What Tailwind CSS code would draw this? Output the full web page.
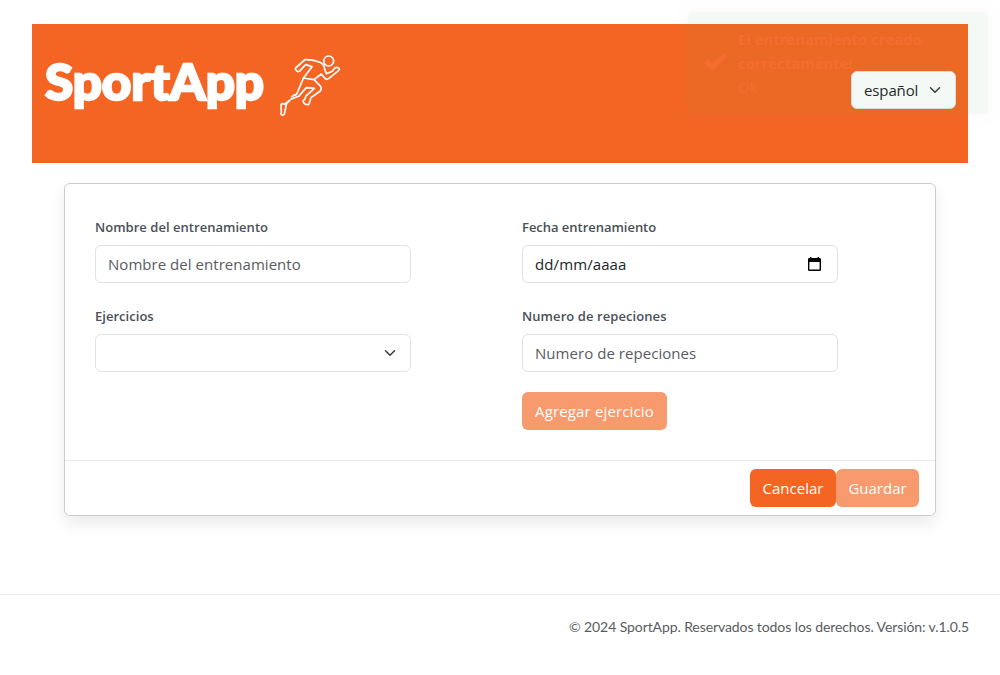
<!DOCTYPE html>
<html lang="es">
<head>
<meta charset="utf-8">
<title>SportApp</title>
<script src="https://cdn.jsdelivr.net/npm/@tailwindcss/browser@4"></script>
</head>
<body class="relative h-[675px] overflow-hidden bg-white pt-6 font-['Open_Sans',sans-serif] text-[15px] text-[#212529]">
<header class="mx-8 flex h-[139px] justify-between bg-[#f46523] px-3">
  <div class="flex">
    <svg class="mt-5 h-[90px] w-[226px]" viewBox="0 0 226 90" role="img"><text x="1" y="56" textLength="219" lengthAdjust="spacingAndGlyphs" class="fill-white stroke-white stroke-[2.4px] font-['Lato',sans-serif] text-[50px] font-black">SportApp</text></svg>
    <svg class="mt-[21px] size-20" viewBox="0 0 240 240" fill="none" stroke="#fff" stroke-width="5" stroke-linecap="round" stroke-linejoin="round">
      <circle cx="176" cy="48" r="15"/>
      <path d="M65 155 72 151Q79 151 82 143L101 98 126 65 107 59 88 79Q81 82 77 74Q74 70 80 66L105 44Q130 43 150 52Q164 59 164 73L169 86 187 79 194 69Q202 64 208 71Q208 76 202 80L176 101Q168 106 162 97L154 87 132 104 152 124Q155 131 151 138L123 158 117 177Q115 181 108 178Q101 176 100 171Q98 165 105 163L107 154 133 130 109 128 86 154 64 162 50 175 43 207Q41 212 35 210Q32 207 34 199L33 179Q36 174 43 178L60 165M99 99 132 104"/>
    </svg>
  </div>
  <button class="mt-[47px] flex h-[38px] w-[105px] items-center justify-between rounded-md border border-[#dee2e6] bg-white pr-3 pl-3">
    <span class="tracking-[-0.12px]">español</span>
    <svg class="mr-0.5 size-3" viewBox="0 0 16 16" fill="none" stroke="#343a40" stroke-width="2" stroke-linecap="round" stroke-linejoin="round"><path d="m2 5 6 6 6-6"/></svg>
  </button>
</header>

<main class="mx-16 mt-5 h-[333px] rounded-md border border-[#cbccce] bg-white shadow-[0_8px_16px_rgba(0,0,0,0.08)]">
  <div class="grid h-[277px] grid-cols-[316px_316px] content-start gap-x-[111px] border-b border-[#e9e9ea] px-[30px] pt-[33px]">
    <div class="h-[89px]">
      <label class="block h-7 text-[13px] leading-5 font-semibold text-[#495057]"><span class="tracking-[0.03px]">Nombre del entrenamiento</span></label>
      <div class="flex h-[38px] items-center rounded-md border border-[#dee2e6] px-3 text-[#595c5f]"><span class="tracking-[0.04px]">Nombre del entrenamiento</span></div>
    </div>
    <div class="h-[89px]">
      <label class="block h-7 text-[13px] leading-5 font-semibold text-[#495057]"><span class="tracking-[-0.03px]">Fecha entrenamiento</span></label>
      <div class="flex h-[38px] items-center justify-between rounded-md border border-[#dee2e6] px-3"><span class="tracking-[0.1px]">dd/mm/aaaa</span>
        <svg class="mr-1 h-[14px] w-[13px]" viewBox="0 0 13 14"><path fill="#000" fill-rule="evenodd" d="M2 0h1.5v1h6V0H11v1h.8q1.2 0 1.2 1.2v10.6q0 1.2-1.2 1.2H1.2Q0 14 0 12.8V2.2Q0 1 1.2 1H2zM1.4 5v7.6h10.2V5z"/></svg>
      </div>
    </div>
    <div>
      <label class="block h-7 text-[13px] leading-5 font-semibold text-[#495057]"><span class="tracking-[0.03px]">Ejercicios</span></label>
      <div class="flex h-[38px] items-center justify-end rounded-md border border-[#dee2e6] px-3">
        <svg class="mr-0.5 size-3" viewBox="0 0 16 16" fill="none" stroke="#343a40" stroke-width="2" stroke-linecap="round" stroke-linejoin="round"><path d="m2 5 6 6 6-6"/></svg>
      </div>
    </div>
    <div>
      <label class="block h-7 text-[13px] leading-5 font-semibold text-[#495057]"><span class="tracking-[0.08px]">Numero de repeciones</span></label>
      <div class="flex h-[38px] items-center rounded-md border border-[#dee2e6] px-3 text-[#595c5f]"><span class="tracking-[0.05px]">Numero de repeciones</span></div>
      <button class="mt-5 flex h-[38px] w-[145px] items-center justify-center whitespace-nowrap rounded-md bg-[#f79a6d] text-white"><span class="tracking-[0.15px]">Agregar ejercicio</span></button>
    </div>
  </div>
  <div class="flex justify-end px-4 pt-2 text-white">
    <button class="h-[38px] w-[86px] rounded-md bg-[#f46523]"><span>Cancelar</span></button>
    <button class="h-[38px] w-[83px] rounded-md bg-[#f79a6d]"><span>Guardar</span></button>
  </div>
</main>

<footer class="mt-[78px] flex justify-end border-t border-[#e9e9ea] pt-[22px] pr-[31px]">
  <p class="whitespace-nowrap font-['Lato',sans-serif] text-[14px] leading-5 tracking-[-0.09px] text-[#595c5f]">© 2024 SportApp. Reservados todos los derechos. Versión: v.1.0.5</p>
</footer>

<div class="absolute top-3 left-[688px] flex h-[102px] w-[300px] rounded-[3px] bg-[#51a351] pt-[15px] pl-[15px] text-white opacity-5 shadow-[0_0_12px_#999]">
  <svg class="mt-[25px] mr-[10px] h-[21px] w-[25px]" viewBox="0 0 25 21"><path fill="#fff" d="m1 11 4-4 4.500 4.500L21 1l3.500 3.500L9.500 19z"/></svg>
  <div class="whitespace-nowrap leading-6">
    <p class="font-bold tracking-[-0.08px]">El entrenamiento creado<br>correctamente!</p>
    <p>Ok</p>
  </div>
</div>
</body>
</html>
